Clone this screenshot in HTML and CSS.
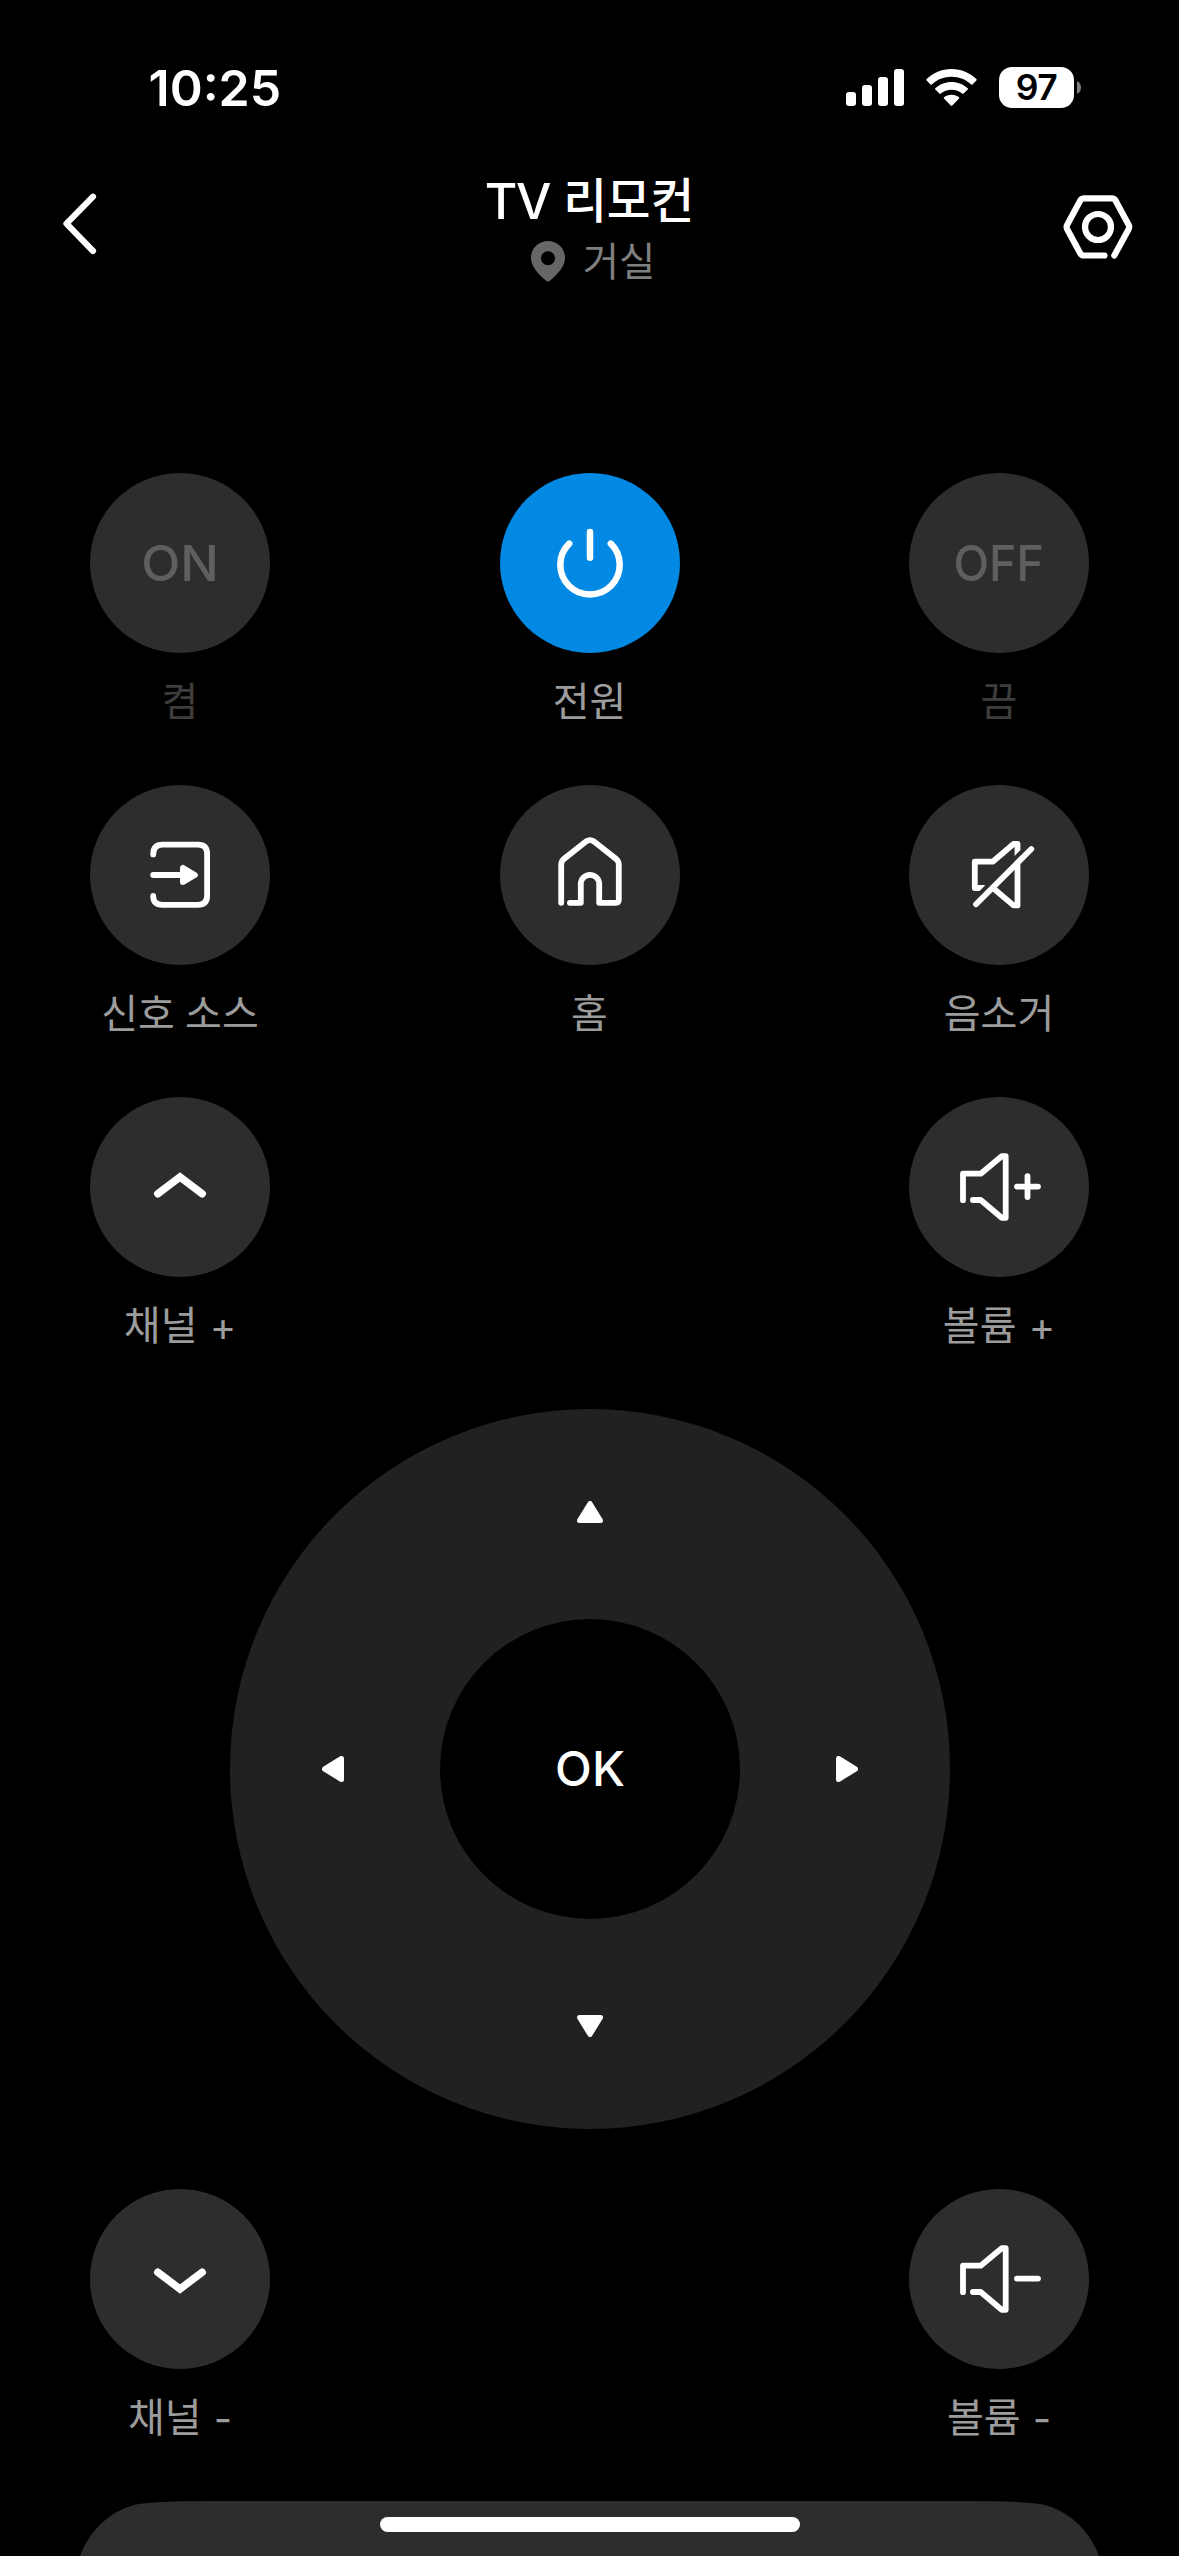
FILE: index.html
```html
<!DOCTYPE html>
<html lang="ko">
<head>
<meta charset="utf-8">
<title>TV 리모컨</title>
<link rel="stylesheet" href="styles.css">
</head>
<body>
<div class="screen">
  <div class="status">
    <span class="time">10:25</span>
    <div class="indicators">
      <svg class="signal" width="58" height="37" viewBox="0 0 58 37" fill="#fff">
        <rect x="0" y="23" width="10" height="14" rx="3"/><rect x="16" y="16" width="10" height="21" rx="3"/><rect x="32" y="8" width="10" height="29" rx="3"/><rect x="48" y="0" width="10" height="37" rx="3"/>
      </svg>
      <svg class="wifi" width="51" height="37" viewBox="0 0 51 37" fill="#fff">
        <path d="M25.500 0C35.300 0 44.200 3.900 50.400 10.100Q51 10.800 50.400 11.500L46.500 15.400Q45.800 16 45.100 15.400C40 10.600 33.100 7.800 25.500 7.800S11 10.600 5.900 15.400Q5.200 16 4.500 15.400L.6 11.500Q0 10.800 .6 10.100C6.800 3.900 15.700 0 25.500 0Z"/>
        <path d="M25.500 12.900C31.800 12.900 37.500 15.300 41.700 19.200Q42.400 19.900 41.700 20.600L37.600 24.600Q36.900 25.200 36.200 24.600C33.400 22.200 29.600 20.700 25.500 20.700S17.600 22.200 14.800 24.600Q14.100 25.200 13.400 24.600L9.300 20.600Q8.600 19.900 9.300 19.200C13.500 15.300 19.200 12.900 25.500 12.900Z"/>
        <path d="M25.500 25.700C28.500 25.700 31.100 26.700 33 28.200Q33.700 28.900 33 29.600L26.300 36.400Q25.500 37 24.700 36.400L18 29.600Q17.300 28.900 18 28.200C19.900 26.700 22.500 25.700 25.500 25.700Z"/>
      </svg>
      <div class="battery"><span class="level">97</span></div>
      <svg class="nub" width="4" height="13" viewBox="0 0 4 13"><path d="M0 0Q4 2 4 6.500T0 13Z" fill="#7f7f7f"/></svg>
    </div>
  </div>

  <header class="header">
    <svg class="back" width="40" height="64" viewBox="60 192 40 64" fill="none" stroke="#fff" stroke-width="6.200" stroke-linecap="round" stroke-linejoin="round"><path d="M93 196.700L66.500 223.700L93 251"/></svg>
    <div class="heading">
      <h1 class="title"><span class="latin">TV</span> 리모컨</h1>
      <div class="room">
        <svg class="pin" width="34" height="41" viewBox="0 0 34 41"><path fill="#666" fill-rule="evenodd" d="M17 0C26.500 0 34 7.300 34 16.700C34 24.500 28.500 31.500 18.500 40Q17 41.200 15.500 40C5.500 31.500 0 24.500 0 16.700C0 7.300 7.500 0 17 0ZM17 10.200A7 7 0 1 0 17 24.200A7 7 0 1 0 17 10.200Z"/></svg>
        <span>거실</span>
      </div>
    </div>
    <svg class="settings" width="70" height="66" viewBox="1063 194 70 66" fill="none" stroke="#fff" stroke-width="6.200" stroke-linecap="round" stroke-linejoin="round"><path d="M1104.500 255.500H1084Q1081.500 255.500 1080.300 253.400L1067.200 229.200Q1066 227 1067.200 224.800L1080.300 200.500Q1081.500 198.400 1084 198.400H1112Q1114.300 198.400 1115.500 200.500L1128.600 224.800Q1129.800 227 1128.600 229.200L1114.300 255.500"/><circle cx="1098" cy="227" r="13"/></svg>
  </header>

  <main class="remote">
    <div class="row">
      <div class="control off"><button class="key"><span class="on-text">ON</span></button><span class="label">켬</span></div>
      <div class="control"><button class="key power"><svg class="icon" viewBox="0 0 180 180"><path d="M90 59V84.800M69.200 70.600A29.700 29.700 0 1 0 110.800 70.600"/></svg></button><span class="label">전원</span></div>
      <div class="control off"><button class="key"><span class="off-text">OFF</span></button><span class="label">끔</span></div>
    </div>
    <div class="row">
      <div class="control"><button class="key"><svg class="icon" viewBox="0 0 180 180"><path d="M63.200 69.400Q63.200 59.600 72.500 59.600H108Q117.100 59.600 117.100 68.600V110.800Q117.100 119.800 108 119.800H72.500Q63.200 119.800 63.200 111M63.200 90H92"/><path d="M93 83V97L104.800 90Z" fill="#fff" stroke-width="6"/></svg></button><span class="label">신호 소스</span></div>
      <div class="control"><button class="key"><svg class="icon" viewBox="0 0 180 180"><path d="M61.200 117.800V79.500Q61.200 76.300 63.700 74.100L86 56.500Q90 53.700 94 56.500L116.300 74.100Q118.800 76.300 118.800 79.500V114.800Q118.800 117.800 115.800 117.800H99.200V99A9.200 9.200 0 0 0 80.800 99V117.800H69.900"/></svg></button><span class="label">홈</span></div>
      <div class="control"><button class="key"><svg class="icon" viewBox="0 0 180 180"><path d="M74.500 103H65.800V76.700H83.700L104.500 59H108.500V78V120.400H104.500L84.300 103.300" /><path class="cut" d="M117 62.400L62 117.400"/><path d="M122.300 64L67 119.300"/></svg></button><span class="label">음소거</span></div>
    </div>
    <div class="row">
      <div class="control"><button class="key"><svg class="icon chevron" viewBox="0 0 180 180"><path d="M67.800 96.800L90 80L112.200 96.800"/></svg></button><span class="label">채널 <span class="sign">+</span></span></div>
      <div class="control"><button class="key"><svg class="icon" viewBox="0 0 180 180"><path d="M54 103.200V76.700H71.700L92.700 59.200H96.700V120.800H92.700L71.700 103H63.900M108 89.600H129M118.500 79.100V100.100"/></svg></button><span class="label">볼륨 <span class="sign">+</span></span></div>
    </div>

    <div class="dial">
      <svg class="arrow up" viewBox="0 0 26 22"><path d="M13 2.500L23.500 19.500H2.500Z"/></svg>
      <svg class="arrow left" viewBox="0 0 22 26"><path d="M2.500 13L19.500 2.500V23.500Z"/></svg>
      <button class="ok">OK</button>
      <svg class="arrow right" viewBox="0 0 22 26"><path d="M19.500 13L2.500 2.500V23.500Z"/></svg>
      <svg class="arrow down" viewBox="0 0 26 22"><path d="M13 19.500L23.500 2.500H2.500Z"/></svg>
    </div>

    <div class="row last">
      <div class="control"><button class="key"><svg class="icon chevron" viewBox="0 0 180 180"><path d="M67.800 83.200L90 100L112.200 83.200"/></svg></button><span class="label">채널 <span class="sign">-</span></span></div>
      <div class="control"><button class="key"><svg class="icon" viewBox="0 0 180 180"><path d="M54 103.200V76.700H71.700L92.700 59.200H96.700V120.800H92.700L71.700 103H63.900M108 89.600H129"/></svg></button><span class="label">볼륨 <span class="sign">-</span></span></div>
    </div>
  </main>

  <footer class="sheet">
    <svg class="sheet-shape" width="1035" height="55" viewBox="0 0 1035 55"><path d="M8 55C17 31 36 11 62 4Q80 0 137 0H898Q955 0 973 4C999 11 1018 31 1027 55Z" fill="#2d2d2f"/></svg>
    <div class="home-bar"></div>
  </footer>
</div>
</body>
</html>
```
FILE: styles.css
```css
* { box-sizing: border-box; }

body {
  margin: 0;
  background: #000;
  font-family: Inter, "Noto Sans CJK KR", sans-serif;
}

.screen {
  width: 1179px;
  height: 2556px;
  overflow: hidden;
  display: flex;
  flex-direction: column;
  color: #fff;
}

/* Status bar */
.status {
  height: 176px;
  padding: 0 98px 0 148.500px;
  display: flex;
  justify-content: space-between;
}

.time {
  padding-top: 58px;
  font-size: 50px;
  line-height: 60px;
  font-weight: 600;
}

.indicators {
  padding-top: 67px;
  display: flex;
  align-items: flex-start;
}

.signal { margin: 2px 22px 0 0; }
.wifi { margin: 2px 22px 0 0; }

.battery {
  width: 75px;
  height: 41px;
  border-radius: 13px;
  background: #fff;
  display: flex;
  align-items: center;
  justify-content: center;
}

.level {
  color: #000;
  font-size: 35.500px;
  line-height: 41px;
  font-weight: 600;
  letter-spacing: -.5px;
}

.nub { margin: 14px 0 0 3px; }

/* Header */
.header {
  height: 297px;
  padding: 0 46px 0 60px;
  display: flex;
  justify-content: space-between;
}

.back { margin-top: 16px; }
.settings { margin-top: 18px; }

.heading {
  margin: -3px 0 0 16px;
  display: flex;
  flex-direction: column;
  align-items: center;
}

.title {
  margin: 0;
  font-family: "Noto Sans CJK KR", sans-serif;
  font-size: 47.500px;
  line-height: 50px;
  font-weight: 500;
  word-spacing: 0;
  white-space: nowrap;
}

.latin {
  font-family: Inter, sans-serif;
  font-size: 50px;
  font-weight: 500;
  letter-spacing: -1.500px;
  line-height: 0;
  vertical-align: -1px;
}

.room {
  margin-top: 10px;
  padding-left: 7px;
  display: flex;
  gap: 18px;
  align-items: center;
  font-family: "Noto Sans CJK KR", sans-serif;
  font-size: 39.500px;
  line-height: 52px;
  font-weight: 400;
  color: #7f7f7f;
}

.pin { margin-top: 4px; }

/* Remote keys */
.row {
  height: 312px;
  padding: 0 90px;
  display: flex;
  justify-content: space-between;
}

.control {
  width: 180px;
  display: flex;
  flex-direction: column;
  align-items: center;
}

.key {
  width: 180px;
  height: 180px;
  padding: 0;
  border: 0;
  border-radius: 50%;
  background: #2d2d2f;
  color: #5f5f61;
  font: 500 50px/60px Inter, sans-serif;
  display: flex;
  align-items: center;
  justify-content: center;
}

.power { background: #0289e4; }

.icon {
  width: 180px;
  height: 180px;
  fill: none;
  stroke: #fff;
  stroke-width: 5.800px;
  stroke-linecap: round;
  stroke-linejoin: round;
}

.power .icon { stroke-width: 6.500px; }
.cut { stroke: #2d2d2f; stroke-width: 4px; stroke-linecap: butt; }
.chevron { stroke-width: 7.500px; stroke-linejoin: miter; }

.on-text { transform: scaleX(1.02); }
.off-text { transform: scaleX(.93); }

.label {
  margin-top: 16px;
  font-family: "Noto Sans CJK KR", sans-serif;
  font-size: 40px;
  line-height: 60px;
  font-weight: 400;
  word-spacing: -1px;
  white-space: nowrap;
  color: #9c9c9c;
}

.sign {
  margin-left: 2px;
  font-family: Inter, sans-serif;
  font-weight: 400;
  line-height: 0;
  vertical-align: -1px;
}

.off .label { color: #3d3d3d; }

/* Direction pad */
.dial {
  width: 720px;
  height: 720px;
  margin: 0 auto 60px 230px;
  padding: 92px;
  border-radius: 50%;
  background: #212123;
  display: grid;
  grid-template-columns: 118px 300px 118px;
  grid-template-rows: 118px 300px 118px;
}

.arrow {
  width: 26px;
  height: 22px;
  fill: #fff;
  stroke: #fff;
  stroke-width: 5px;
  stroke-linejoin: round;
}

.up { grid-area: 1 / 2; justify-self: center; }
.down { grid-area: 3 / 2; justify-self: center; align-self: end; }
.left { grid-area: 2 / 1; width: 22px; height: 26px; align-self: center; }
.right { grid-area: 2 / 3; width: 22px; height: 26px; align-self: center; justify-self: end; }

.ok {
  grid-area: 2 / 2;
  border: 0;
  padding: 0;
  border-radius: 50%;
  background: #000;
  color: #fff;
  font: 500 48px/60px Inter, sans-serif;
}

/* Bottom sheet */
.sheet {
  height: 55px;
  display: flex;
  flex-direction: column;
  align-items: center;
}

.sheet-shape { display: block; flex: none; }

.home-bar {
  flex: none;
  width: 420px;
  height: 15px;
  margin-top: -39px;
  border-radius: 8px;
  background: #fff;
  z-index: 1;
}
```
